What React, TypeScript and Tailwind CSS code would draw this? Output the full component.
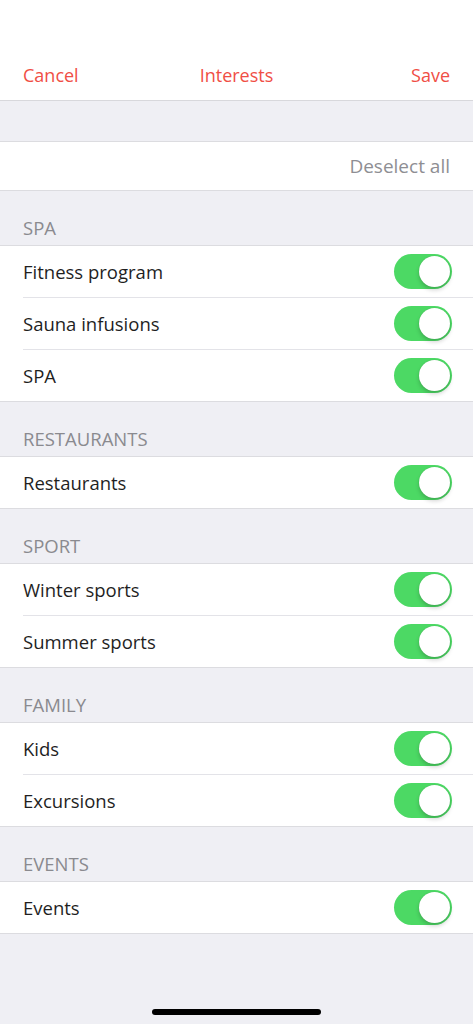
import React from "react";

const sections: { title: string; items: string[] }[] = [
  { title: "SPA", items: ["Fitness program", "Sauna infusions", "SPA"] },
  { title: "RESTAURANTS", items: ["Restaurants"] },
  { title: "SPORT", items: ["Winter sports", "Summer sports"] },
  { title: "FAMILY", items: ["Kids", "Excursions"] },
  { title: "EVENTS", items: ["Events"] },
];

function Toggle() {
  return (
    <div className="relative h-[35px] w-[58px] rounded-full bg-[#4cd964]">
      <div className="absolute right-[2px] top-[2px] h-[31px] w-[31px] rounded-full bg-white shadow-[0_3px_4px_rgba(0,0,0,0.18),0_0_1px_rgba(0,0,0,0.2)]" />
    </div>
  );
}

export default function App() {
  return (
    <div
      className="flex min-h-[1024px] w-[473px] flex-col bg-[#efeff4]"
      style={{ fontFamily: '"Open Sans", "Noto Sans", sans-serif' }}
    >
      <div className="bg-white pt-[50px] border-b border-[#d8d8dc]">
        <div className="grid h-[50px] grid-cols-[1fr_auto_1fr] items-center px-[23px] text-[18px] text-[#f04e45]">
          <span className="justify-self-start">Cancel</span>
          <span>Interests</span>
          <span className="justify-self-end">Save</span>
        </div>
      </div>
      <div className="h-[40px]" />
      <div className="flex h-[50px] items-center justify-end border-y border-[#dcdce0] bg-white px-[23px] text-[19px] text-[#8e8e93]">
        Deselect all
      </div>
      {sections.map((s) => (
        <div key={s.title}>
          <div className="flex h-[55px] items-end border-b border-[#dcdce0] px-[23px] pb-[3px] text-[18.5px] text-[#8a8a8f]">
            {s.title}
          </div>
          <div className="bg-white">
            {s.items.map((it, i) => {
              const last = i === s.items.length - 1;
              return (
                <div
                  key={it}
                  className={last ? "border-b border-[#dcdce0] pl-[23px]" : "pl-[23px]"}
                >
                  <div
                    className={
                      last
                        ? "flex h-[51px] items-center justify-between pr-[21px]"
                        : "flex h-[52px] items-center justify-between border-b border-[#e3e3e8] pr-[21px]"
                    }
                  >
                    <span className="text-[18.5px] text-[#1f1f1f]">{it}</span>
                    <Toggle />
                  </div>
                </div>
              );
            })}
          </div>
        </div>
      ))}
      <div className="flex-1" />
      <div className="flex h-[25px] items-end justify-center pb-[9px]">
        <div className="h-[6px] w-[169px] rounded-full bg-black" />
      </div>
    </div>
  );
}
